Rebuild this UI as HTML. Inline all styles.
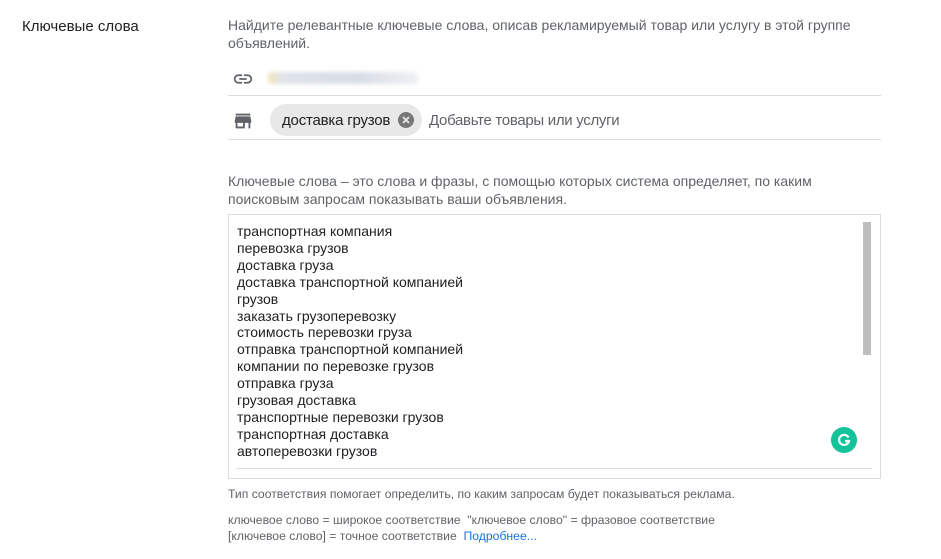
<!DOCTYPE html>
<html><head><meta charset="utf-8"><style>
body{margin:0;width:941px;height:559px;background:#fff;font-family:"Liberation Sans",Arial,sans-serif;position:relative;overflow:hidden}
.a{position:absolute}
.g{color:#5f6368}
.hr{position:absolute;left:228px;width:653px;height:1px;background:#dadce0}
</style></head><body>
<div class="a" style="left:22px;top:18px;font-size:15px;color:#202124">Ключевые слова</div>
<div class="a g" style="left:228px;top:16px;font-size:14px;line-height:18px;width:660px">Найдите релевантные ключевые слова, описав рекламируемый товар или услугу в этой группе объявлений.</div>
<svg class="a" style="left:232px;top:68px" width="22" height="22" viewBox="0 0 24 24"><path fill="#5f6368" d="M3.9 12c0-1.71 1.39-3.1 3.1-3.1h4V7H7c-2.760 0-5 2.24-5 5s2.24 5 5 5h4v-1.9H7c-1.71 0-3.1-1.39-3.1-3.1zM8 13h8v-2H8v2zm9-6h-4v1.9h4c1.71 0 3.1 1.39 3.1 3.1s-1.39 3.1-3.1 3.1h-4V17h4c2.76 0 5-2.24 5-5s-2.24-5-5-5z"/></svg>
<div class="a" style="left:268px;top:72px;width:150px;height:12px;background:linear-gradient(90deg,#f3e3b8,#dfe3ea 10%,#d8dde6 60%,#eef0f3);filter:blur(2px);border-radius:4px"></div>
<div class="hr" style="top:95px"></div>
<svg class="a" style="left:232px;top:110px" width="22" height="22" viewBox="0 0 24 24"><path fill="#5f6368" d="M20 4H4v2h16V4zm1 10v-2l-1-5H4l-1 5v2h1v6h10v-6h4v6h2v-6h1zm-9 4H6v-4h6v4z"/></svg>
<div class="a" style="left:270px;top:104px;width:152px;height:32px;border-radius:16px;background:#e8e8e8"></div>
<div class="a" style="left:282px;top:112px;font-size:15px;color:#202124;letter-spacing:-0.2px">доставка грузов</div>
<svg class="a" style="left:398px;top:112px" width="16" height="16" viewBox="0 0 16 16"><circle cx="8" cy="8" r="8" fill="#777"/><path d="M5 5l6 6M11 5l-6 6" stroke="#e8e8e8" stroke-width="1.8"/></svg>
<div class="a g" style="left:429px;top:112px;font-size:15px;letter-spacing:-0.3px">Добавьте товары или услуги</div>
<div class="hr" style="top:139px"></div>
<div class="a g" style="left:228px;top:172px;font-size:14px;line-height:18px;width:630px">Ключевые слова – это слова и фразы, с помощью которых система определяет, по каким поисковым запросам показывать ваши объявления.</div>
<div class="a" style="left:228px;top:214px;width:651px;height:263px;border:1px solid #dadce0"></div>
<div class="a" style="left:237px;top:223px;font-size:14px;line-height:16.9px;color:#202124">транспортная компания<br>перевозка грузов<br>доставка груза<br>доставка транспортной компанией<br>грузов<br>заказать грузоперевозку<br>стоимость перевозки груза<br>отправка транспортной компанией<br>компании по перевозке грузов<br>отправка груза<br>грузовая доставка<br>транспортные перевозки грузов<br>транспортная доставка<br>автоперевозки грузов</div>
<div class="a" style="left:863px;top:222px;width:8px;height:133px;background:#bdbdbd"></div>
<div class="a" style="left:236px;top:468px;width:636px;height:1px;background:#dadce0"></div>
<svg class="a" style="left:831px;top:427px" width="26" height="26" viewBox="0 0 26 26"><circle cx="13" cy="13" r="13" fill="#15c39a"/><path d="M17.5 10.5A5 5 0 1 0 18 14h-4" stroke="#fff" stroke-width="2.2" fill="none"/></svg>
<div class="a g" style="left:228px;top:487px;font-size:12.2px">Тип соответствия помогает определить, по каким запросам будет показываться реклама.</div>
<div class="a g" style="left:228px;top:512px;font-size:12.2px;line-height:16px">ключевое слово = широкое соответствие &nbsp;"ключевое слово" = фразовое соответствие<br>[ключевое слово] = точное соответствие &nbsp;<span style="color:#1a73e8">Подробнее...</span></div>
</body></html>
